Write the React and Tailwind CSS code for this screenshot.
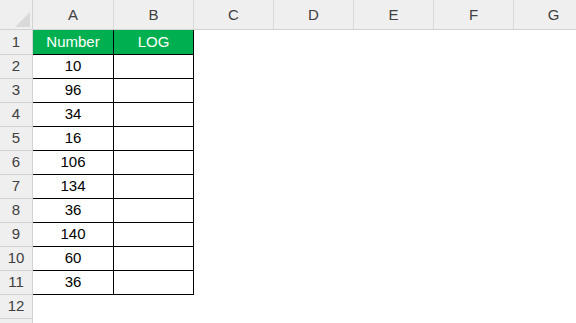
import React from "react";

const cols = ["A", "B", "C", "D", "E", "F", "G"];
const numbers = [10, 96, 34, 16, 106, 134, 36, 140, 60, 36];

const colWidth = (i) => (i === 0 ? "w-[81px]" : "w-[80px]");

const ColumnHeader = () => (
  <div className="flex h-[30px] bg-[#efefef] border-b border-[#d2d2d2]">
    <div className="relative w-[33px] shrink-0 border-r border-[#d2d2d2]">
      <svg className="absolute left-0 top-0" width="33" height="29">
        <polygon points="15,27 30,27 30,12" fill="#d9d9d9" />
      </svg>
    </div>
    {cols.map((c, i) => (
      <div
        key={c}
        className={`${colWidth(i)} shrink-0 flex items-end justify-center pb-[3px] border-r border-[#dadada] text-[15px] text-[#404040]`}
      >
        {c}
      </div>
    ))}
  </div>
);

const RowHeader = ({ n }) => (
  <div className="w-[33px] shrink-0 h-full bg-[#efefef] border-r border-b border-[#d2d2d2] flex items-center justify-center text-[15px] text-[#404040]">
    {n}
  </div>
);

const App = () => {
  return (
    <div className="w-[576px] h-[323px] overflow-hidden bg-white font-['Liberation_Sans',Arial,sans-serif]">
      <ColumnHeader />
      <div className="flex h-[25px]">
        <RowHeader n={1} />
        <div className="w-[81px] shrink-0 bg-[#00b050] border-r border-b border-black flex items-center justify-center text-white text-[15px]">
          Number
        </div>
        <div className="w-[80px] shrink-0 bg-[#00b050] border-r border-b border-black flex items-center justify-center text-white text-[15px]">
          LOG
        </div>
      </div>
      {numbers.map((v, i) => (
        <div key={i} className="flex h-[24px]">
          <RowHeader n={i + 2} />
          <div className="w-[81px] shrink-0 border-r border-b border-black flex items-center justify-center text-black text-[15px]">
            {v}
          </div>
          <div className="w-[80px] shrink-0 border-r border-b border-black" />
        </div>
      ))}
      <div className="flex h-[24px]">
        <RowHeader n={12} />
      </div>
      <div className="flex h-[24px]">
        <RowHeader n="" />
      </div>
    </div>
  );
};

export default App;
